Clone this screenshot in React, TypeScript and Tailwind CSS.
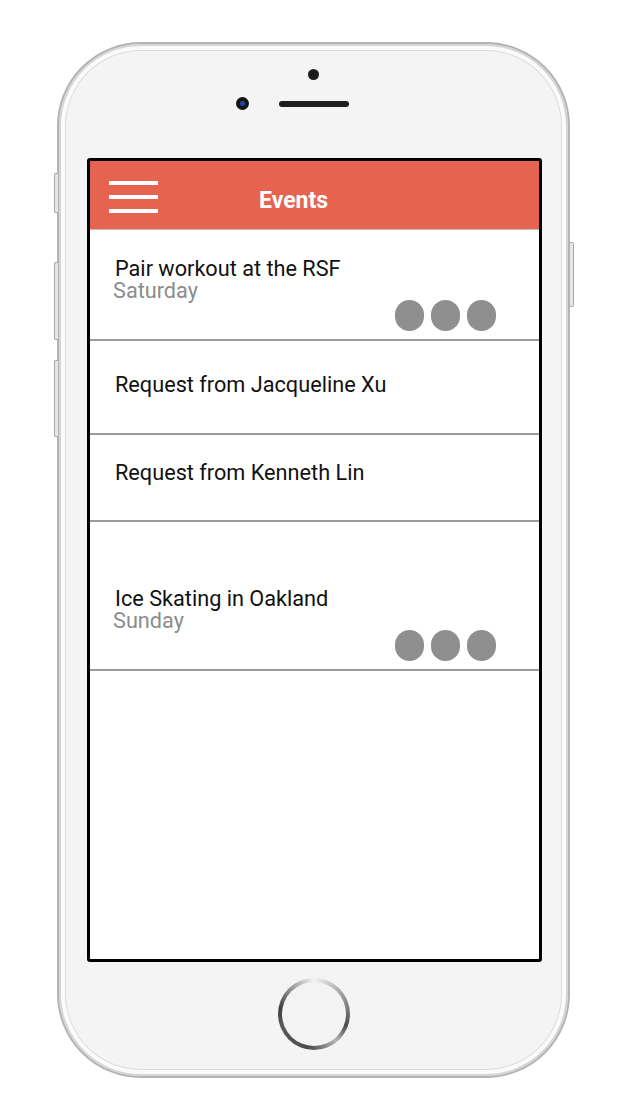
const FONT = { fontFamily: 'Roboto, "Noto Sans", sans-serif' };

type EventRow = {
  title: string;
  day?: string;
  dots?: boolean;
  rowClass: string;
  padClass: string;
};

const ROWS: EventRow[] = [
  { title: 'Pair workout at the RSF', day: 'Saturday', dots: true, rowClass: 'h-[111px]', padClass: 'pt-[28px]' },
  { title: 'Request from Jacqueline Xu', rowClass: 'h-[94px]', padClass: 'pt-[33px]' },
  { title: 'Request from Kenneth Lin', rowClass: 'h-[87px]', padClass: 'pt-[27px]' },
  { title: 'Ice Skating in Oakland', day: 'Sunday', dots: true, rowClass: 'h-[149px]', padClass: 'pt-[66px]' },
];

function Dots() {
  return (
    <div className="self-end pb-[8px] flex gap-[7px]">
      {[0, 1, 2].map((i) => (
        <div key={i} className="w-[29px] h-[31px] rounded-full bg-[#8f8f8f]" />
      ))}
    </div>
  );
}

function Row({ row }: { row: EventRow }) {
  return (
    <div className={`flex justify-between border-b-2 border-[#9a9a9a] pl-[25px] pr-[43px] ${row.rowClass}`}>
      <div className={row.padClass}>
        <div className="text-[21.7px] leading-[22px] text-[#111]">{row.title}</div>
        {row.day && <div className="text-[21.7px] leading-[22px] text-[#8c8c8c] -ml-[2px]">{row.day}</div>}
      </div>
      {row.dots && <Dots />}
    </div>
  );
}

export default function App() {
  return (
    <div className="min-h-[1118px] bg-white pt-[42px] pl-[57px]" style={FONT}>
      <div className="relative w-[513px] h-[1036px] rounded-[84px] border-2 border-[#b4b4b4] bg-[#f4f4f4] shadow-[inset_0_0_0_2px_#d6d6d6,inset_0_0_0_6px_#fbfbfb,inset_0_0_0_7px_#dcdcdc]">
        {/* side buttons */}
        <div className="absolute left-[-5px] top-[129px] w-[4px] h-[40px] rounded-l-[2px] border border-r-0 border-[#a9a9a9] bg-[#e6e6e6]" />
        <div className="absolute left-[-5px] top-[218px] w-[4px] h-[78px] rounded-l-[2px] border border-r-0 border-[#a9a9a9] bg-[#e6e6e6]" />
        <div className="absolute left-[-5px] top-[316px] w-[4px] h-[77px] rounded-l-[2px] border border-r-0 border-[#a9a9a9] bg-[#e6e6e6]" />
        <div className="absolute right-[-6px] top-[198px] w-[4px] h-[65px] rounded-r-[2px] border border-l-0 border-[#a9a9a9] bg-[#e6e6e6]" />

        {/* top: sensor, camera, speaker */}
        <div className="h-[114px] flex flex-col items-center">
          <div className="mt-[25px] w-[11px] h-[11px] rounded-full bg-[#1c1c1c]" />
          <div className="mt-[17px] flex items-center">
            <div className="w-[13px] h-[13px] rounded-full bg-[#151515] flex items-center justify-center mr-[30px]">
              <div className="w-[5px] h-[5px] rounded-full bg-[#2747a8]" />
            </div>
            <div className="w-[70px] h-[6px] rounded-full bg-[#1e1e1e]" />
            <div className="w-[43px]" />
          </div>
        </div>

        {/* screen */}
        <div className="ml-[28px] w-[455px] h-[804px] border-[3px] border-black rounded-[3px] bg-white overflow-hidden">
          <div className="h-[69px] bg-[#e5634f] border-b border-[#bdbdbd] flex items-start">
            <div className="ml-[19px] mt-[20px] w-[49px] flex flex-col gap-[10px]">
              <div className="h-[4px] bg-white" />
              <div className="h-[4px] bg-white" />
              <div className="h-[4px] bg-white" />
            </div>
            <div className="ml-[101px] mt-[26px] text-[23px] leading-[27px] font-bold text-white">Events</div>
          </div>
          {ROWS.map((r) => (
            <Row key={r.title} row={r} />
          ))}
        </div>

        {/* home button */}
        <div className="flex justify-center">
          <div className="mt-[16px] ml-[1px] w-[72px] h-[72px] rounded-full p-[4px] bg-[conic-gradient(from_0deg,#f2f2f2,#8a8a8a_70deg,#4d4d4d_110deg,#b5b5b5_140deg,#4a4a4a_190deg,#5c5c5c_250deg,#3f3f3f_280deg,#9a9a9a_320deg,#f2f2f2)]">
            <div className="w-full h-full rounded-full bg-[#f3f3f3]" />
          </div>
        </div>
      </div>
    </div>
  );
}
